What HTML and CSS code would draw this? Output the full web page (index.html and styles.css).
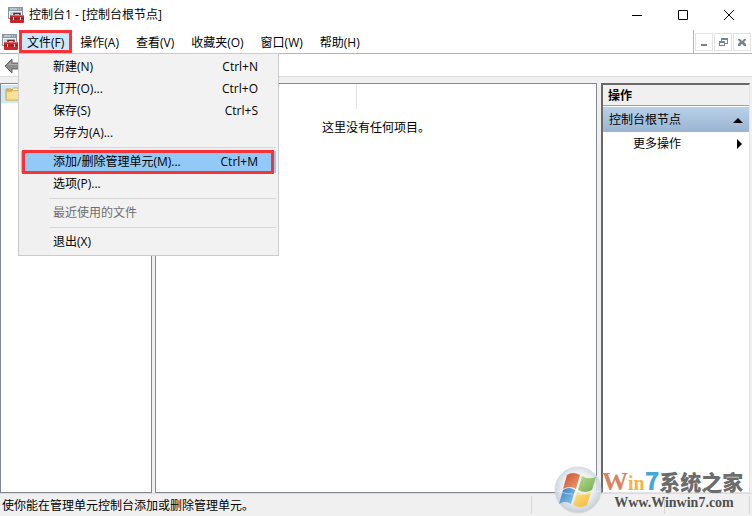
FILE: index.html
```
<!DOCTYPE html>
<html lang="zh-CN">
<head>
<meta charset="utf-8">
<title>控制台1 - [控制台根节点]</title>
<link rel="stylesheet" href="styles.css">
</head>
<body>
<svg class="defs" aria-hidden="true">
  <symbol id="console" viewBox="0 0 16 16">
    <rect x="0.5" y="0.5" width="14" height="11" fill="#eef2f5" stroke="#8996a2"/>
    <path d="M1 1h13v3H1z" fill="#8b9aa8"/>
    <path d="M2 2h7M10 2h1M12 2h1" stroke="#e9f0f5"/>
    <path d="M2 6h3M2 8h2M7 6h6M6 5v6" stroke="#a5b0ba"/>
    <path d="M6 8V6.500h6V8" fill="none" stroke="#65292a" stroke-width="1.500"/>
    <rect x="2" y="8" width="14" height="8" rx="1" fill="#c6272b"/>
    <path d="M3 8.500h12" stroke="#e7676a"/>
    <path d="M2 11.500h14" stroke="#8c181c"/>
    <path d="M5 10h1v3H5zM12 10h1v3h-1z" fill="#f4e9e9"/>
  </symbol>
</svg>

<header class="titlebar">
  <svg class="app-icon"><use href="#console"/></svg>
  <h1>控制台1 - [控制台根节点]</h1>
  <div class="window-controls">
    <button aria-label="最小化"><svg viewBox="0 0 12 12"><path d="M1 6.500h10"/></svg></button>
    <button aria-label="最大化"><svg viewBox="0 0 12 12"><path d="M1.500 1.500h9v9h-9z"/></svg></button>
    <button aria-label="关闭"><svg viewBox="0 0 12 12"><path d="M1 1l10 10M11 1L1 11"/></svg></button>
  </div>
</header>

<nav class="menubar">
  <svg class="app-icon child-icon"><use href="#console"/></svg>
  <div class="menu-host">
    <button class="open">文件(F)</button>
    <div class="dropdown">
      <button><span>新建(N)</span><span>Ctrl+N</span></button>
      <button><span>打开(O)...</span><span>Ctrl+O</span></button>
      <button><span>保存(S)</span><span>Ctrl+S</span></button>
      <button><span>另存为(A)...</span></button>
      <hr>
      <button class="selected"><span>添加/删除管理单元(M)...</span><span>Ctrl+M</span></button>
      <button><span>选项(P)...</span></button>
      <hr>
      <button disabled><span>最近使用的文件</span></button>
      <hr>
      <button><span>退出(X)</span></button>
    </div>
  </div>
  <div class="menus">
    <button>操作(A)</button>
    <button>查看(V)</button>
    <button>收藏夹(O)</button>
    <button>窗口(W)</button>
    <button>帮助(H)</button>
  </div>
  <div class="child-controls">
    <button aria-label="最小化子窗口"><svg viewBox="0 0 10 10"><path d="M2 7h6v2H2z"/></svg></button>
    <button aria-label="还原子窗口"><svg viewBox="0 0 10 10"><path fill-rule="evenodd" d="M3 1h7v6H7v2H1V4h2zM4 3v1h3v2h2V3zM2 6v2h4V6z"/></svg></button>
    <button aria-label="关闭子窗口"><svg viewBox="0 0 10 10"><path d="M1 2h2l2 2 2-2h2v1L7 5l2 2v2H7L5 7 3 9H1V7l2-2-2-2z"/></svg></button>
  </div>
</nav>

<div class="toolbar">
  <button aria-label="后退"><svg viewBox="0 0 18 16"><path d="M1 8l7-7v4h9v6H8v4z" fill="#8c8c8c" stroke="#666"/><path d="M3 8l4-4v2h9v1H4z" fill="#aaa"/></svg></button>
</div>

<main class="workspace">
  <section class="pane tree" aria-label="控制台树">
    <div class="tree-node">
      <svg viewBox="0 0 16 16"><path d="M1 3h5l1 1h6l1 1v9H1z" fill="#e5b94d" stroke="#cfa03a"/><path d="M8 2h5v3H7z" fill="#fff" stroke="#d8ae50"/><path d="M1.500 5.500H7l1-1h7v9.500H1.500z" fill="#fae199" stroke="#e1b956"/></svg>
    </div>
  </section>
  <section class="pane content">
    <div class="column-head"></div>
    <p>这里没有任何项目。</p>
  </section>
  <aside class="pane actions">
    <h2>操作</h2>
    <button class="group">控制台根节点<svg viewBox="0 0 10 10"><path d="M0 8l5-5 5 5z"/></svg></button>
    <button class="more">更多操作<svg viewBox="0 0 10 10"><path d="M3 0l5 5-5 5z"/></svg></button>
  </aside>
</main>

<footer class="statusbar">
  <span class="message">使你能在管理单元控制台添加或删除管理单元。</span>
  <span class="cell"></span>
  <span class="cell last"></span>
</footer>

<div class="watermark">
  <svg class="orb" viewBox="0 0 48 48">
    <defs>
      <radialGradient id="glass" cx="50%" cy="45%" r="52%"><stop offset="0" stop-color="#fff"/><stop offset=".65" stop-color="#e9eef2"/><stop offset="1" stop-color="#c5ced6"/></radialGradient>
      <linearGradient id="red" x2="1" y2="1"><stop stop-color="#c94d32"/><stop offset="1" stop-color="#f3a070"/></linearGradient>
      <linearGradient id="green" x2="1" y2="1"><stop stop-color="#bddb95"/><stop offset="1" stop-color="#70aa4c"/></linearGradient>
      <linearGradient id="blue" x2="1" y2="1"><stop stop-color="#3979bc"/><stop offset="1" stop-color="#8dccf0"/></linearGradient>
      <linearGradient id="gold" x2="1" y2="1"><stop stop-color="#ffe38a"/><stop offset="1" stop-color="#efb634"/></linearGradient>
    </defs>
    <circle cx="24" cy="24" r="23" fill="url(#glass)" stroke="#d2d9de" opacity=".9"/>
    <path d="M13 9q6-4 13 0l-4 14q-6-4-13 0z" fill="url(#red)"/>
    <path d="M28 10q6 4 14 1l-4 13q-7 4-14 0z" fill="url(#green)"/>
    <path d="M9 24q6-4 12 0l-4 14q-6-4-12 0z" fill="url(#blue)"/>
    <path d="M23 26q6 4 14 0l-4 13q-7 4-14 0z" fill="url(#gold)"/>
    <path d="M2 25q21 7 44 0" fill="none" stroke="#fff" opacity=".45"/>
  </svg>
  <div class="brand">
    <strong><span class="w">W</span><span class="in">in</span><span class="seven">7</span><span class="zh">系统之家</span></strong>
    <span class="site">Www.Winwin7.com</span>
  </div>
</div>
</body>
</html>
```

FILE: styles.css
```
* { box-sizing: border-box; }

body {
  margin: 0;
  height: 100vh;
  display: flex;
  flex-direction: column;
  position: relative;
  overflow: hidden;
  background: #f0f0f0;
  color: #000;
  font: 12px/18px "Open Sans", "Noto Sans CJK SC", sans-serif;
}

button {
  border: 0;
  padding: 0;
  background: none;
  color: inherit;
  font: inherit;
  white-space: nowrap;
}

svg { display: block; flex: none; }
.defs { position: absolute; width: 0; height: 0; }
.app-icon { width: 16px; height: 16px; }

.titlebar {
  display: flex;
  align-items: center;
  height: 30px;
  padding-left: 8px;
  background: #fff;
}
.titlebar h1 {
  margin: 0 auto 0 5px;
  font-size: 12px;
  font-weight: 400;
}
.window-controls { display: flex; }
.window-controls button {
  display: grid;
  place-items: center;
  width: 46px;
  height: 28px;
}
.window-controls svg {
  width: 12px;
  height: 12px;
  fill: none;
  stroke: #000;
}

.menubar {
  display: flex;
  height: 24px;
  padding-left: 2px;
  background: #fff;
  border-bottom: 1px solid #b0b4bc;
}
.menus { display: flex; gap: 1px; }
.menus button, .open { padding: 2px 8px 0; height: 23px; }
.child-icon { margin: 4px 1px 0 0; }
.menu-host { position: relative; }
.open {
  background: #cce8ff;
  outline: 3px solid #fa3237;
  outline-offset: -3px;
  position: relative;
  z-index: 3;
}

.dropdown {
  position: absolute;
  z-index: 2;
  top: 23px;
  left: -1px;
  width: 261px;
  padding: 2px;
  background: linear-gradient(90deg, #f0f0f0 30px, #f2f2f2 30px);
  border: 1px solid #ccc;
}
.dropdown button {
  display: flex;
  justify-content: space-between;
  align-items: center;
  width: 100%;
  height: 22px;
  padding: 0 18px 0 32px;
}
.dropdown button:disabled { color: #6d6d6d; }
.dropdown .selected {
  position: relative;
  background: #91c9f7;
}
.selected::after {
  content: "";
  position: absolute;
  inset: -1px 2px -1px 1px;
  border: 3px solid #fa3237;
}
.dropdown hr {
  margin: 3px 0 3px 28px;
  border: 0;
  border-top: 1px solid #d7d7d7;
}

.child-controls {
  display: flex;
  align-items: center;
  gap: 1px;
  margin-left: auto;
  padding: 0 1px;
  border-left: 1px solid #b0b4bc;
}
.child-controls button {
  display: grid;
  place-items: center;
  width: 18px;
  height: 18px;
  border: 1px solid #e3e3e3;
}
.child-controls svg { width: 10px; height: 10px; fill: #778592; }

.toolbar {
  height: 23px;
  padding: 4px;
  background: #fff;
  border-bottom: 1px solid #dcdcdc;
}
.toolbar svg { width: 18px; height: 16px; }

.workspace {
  flex: 1;
  min-height: 0;
  display: grid;
  grid-template-columns: 152fr 442fr 150fr;
  column-gap: 3px;
  padding: 6px 2px 0 0;
}
.pane {
  min-width: 0;
  background: #fff;
  border: 1px solid #828790;
}
.tree { padding: 1px 0; }
.tree-node {
  width: 80px;
  padding: 1px 4px;
  background: #cce8ff;
}
.tree-node svg { width: 16px; height: 16px; }

.column-head {
  width: 201px;
  height: 25px;
  border-right: 1px solid #e2e2e2;
}
.content p { margin: 10px 0 0; text-align: center; }

.actions {
  margin-left: 1px;
  border-top: 2px solid #696969;
  border-left: 2px solid #696969;
  border-right-color: #e3e3e3;
  border-bottom-color: #e3e3e3;
}
.actions h2 {
  margin: 0 0 1px;
  padding: 2px 5px 0;
  height: 21px;
  background: #f0f0f0;
  border-bottom: 1px solid #a0a0a0;
  font-size: 12px;
  font-weight: 700;
}
.actions button {
  display: flex;
  justify-content: space-between;
  align-items: center;
  width: 100%;
}
.actions button svg { width: 10px; height: 10px; }
.group {
  height: 25px;
  padding: 0 6px;
  background: linear-gradient(#b9d1ea, #99b4d1);
}
.more { height: 23px; padding: 0 5px 0 30px; }

.statusbar {
  display: flex;
  height: 23px;
  padding-right: 2px;
  border-top: 1px solid #dcdcdc;
}
.message { flex: 1; padding: 3px 2px; }
.cell {
  width: 133px;
  margin: 2px 0;
  border-left: 1px solid #d7d7d7;
}
.last { width: 86px; border-right: 1px solid #d7d7d7; }

.watermark {
  position: absolute;
  right: 6px;
  bottom: 2px;
  display: flex;
}
.orb { width: 48px; height: 48px; }
.brand { width: 144px; white-space: nowrap; }
.brand strong {
  display: flex;
  align-items: baseline;
  height: 28px;
  font: 900 21px/28px "Noto Sans CJK SC", sans-serif;
  color: #6c6c6c;
}
.brand .w, .brand .in { font-family: "Liberation Serif", serif; }
.brand .w { color: #d98360; font-size: 26px; }
.brand .in { color: #f3b34a; font-size: 20px; }
.brand .seven { color: #45a8db; font-size: 24px; }
.site {
  display: block;
  text-align: center;
  color: #505050;
  font: 700 14px/18px "Liberation Serif", serif;
}
```
